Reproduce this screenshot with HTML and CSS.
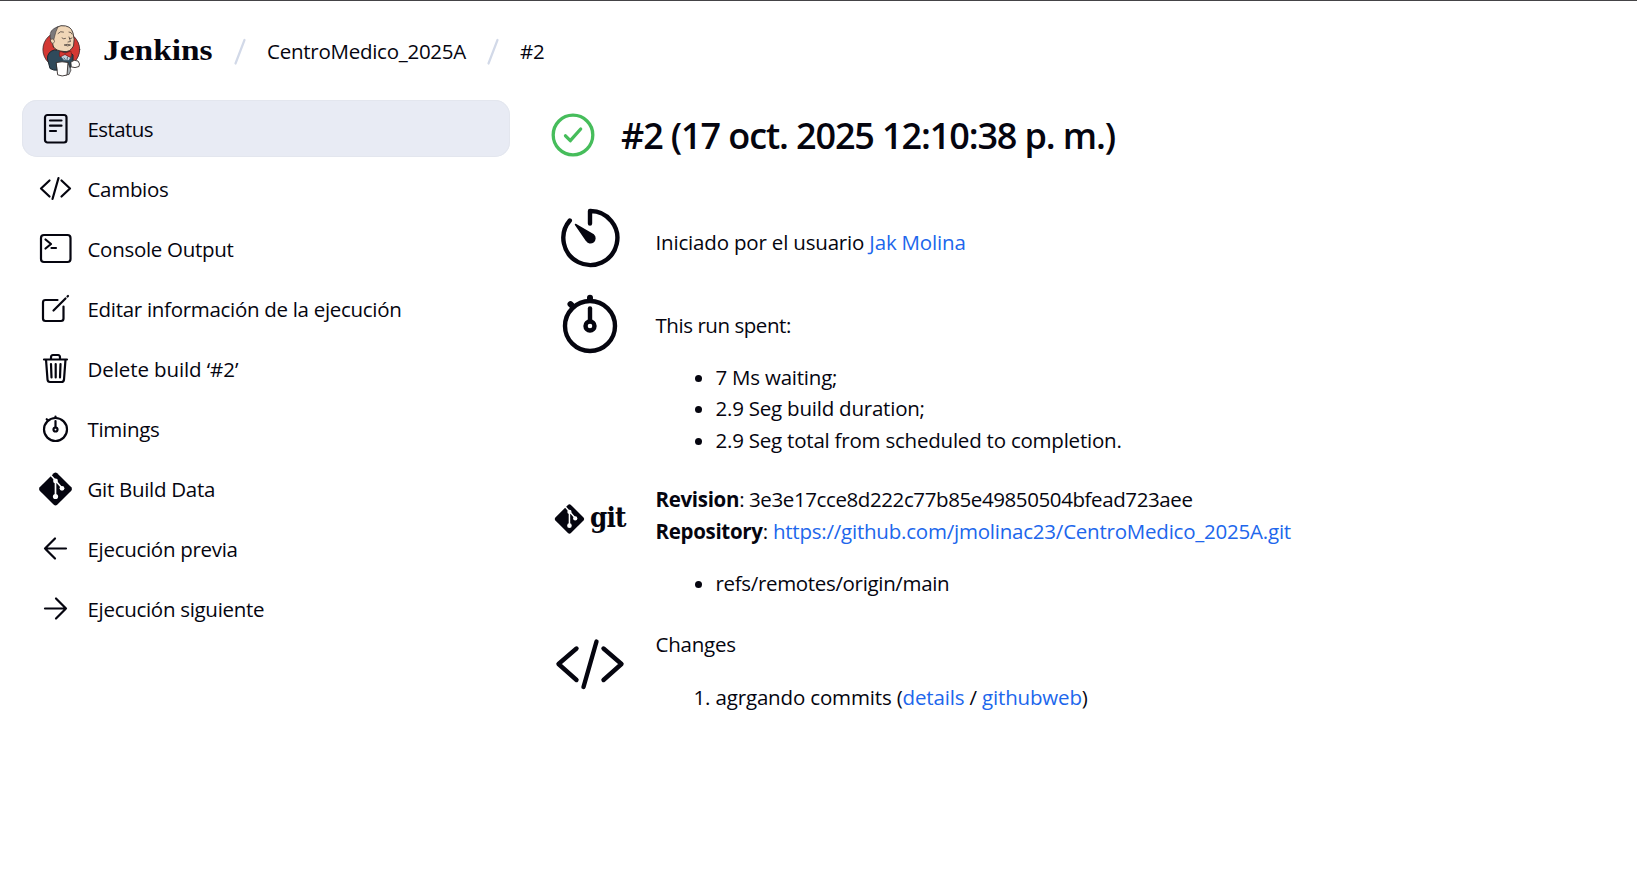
FILE: index.html
```html
<!DOCTYPE html>
<html lang="es">
<head>
<meta charset="utf-8">
<title>#2 - CentroMedico_2025A - Jenkins</title>
<link rel="stylesheet" href="styles.css">
</head>
<body>
<header class="header">
  <svg class="logo" viewBox="0 0 40 54">
    <ellipse cx="20.300" cy="25.500" rx="18.400" ry="18" fill="#d33833" stroke="#3b2a2c" stroke-width=".8"/>
    <path d="M13 26Q6 28 6.500 35L9 44.500Q13 47 17 46L28 46 32 38 32 31 28 27 22 27Z" fill="#2f4a5b" stroke="#1c2830" stroke-width="1"/>
    <path d="M12.500 23L10 14Q10 4 20 1.700Q30 1 32 9Q34 15 32.500 22Q29 28.500 23 27.500Q15 27 12.500 23Z" fill="#f0d6b7" stroke="#332c2b" stroke-width=".9"/>
    <path d="M10 17Q7 8 13 4.500L17 2.800Q14.500 8 13.500 13L12.500 17Z" fill="#7b797c" stroke="#332c2b" stroke-width=".5"/>
    <path d="M9.500 16Q12.500 13 13.500 17.500Q12.500 21 10.500 19Z" fill="#f0d6b7" stroke="#332c2b" stroke-width=".6"/>
    <path d="M17 9.500Q19.500 6.500 22.500 8M28 8Q30.500 8 31 10M21 14Q22.500 15.500 24.500 14.500M28.500 14.500Q30 15 31 14M28 13L29.500 17.500 27 18M23.500 21Q26 19.500 29.500 21Q27 23 23.500 21" fill="none" stroke="#332c2b" stroke-width=".7"/>
    <path d="M21 29L30 33 28 36.500 23 36.500 20 33Z" fill="#c4d2dc" stroke="#335061" stroke-width=".7"/>
    <path d="M23 34L24.500 36M26.500 33L26 36" stroke="#335061" stroke-width=".8"/>
    <path d="M19 27.500Q17.500 30 19 33L24 30.500 29.500 33.500Q31.500 31 29.800 27L24.500 29Z" fill="#d33833" stroke="#7d1715" stroke-width=".7"/>
    <path d="M30 38Q33 35 37 37Q39.500 40 38 42.500Q34 44.500 30.500 43Z" fill="#fff" stroke="#332c2b" stroke-width=".9"/>
    <path d="M27 39L30 46 28 50.500 24 51Z" fill="#a9b2b8" stroke="#332c2b" stroke-width=".7"/>
    <path d="M15.500 38.500Q21 37 27 38.500L26 51Q21 53 17 51Z" fill="#fff" stroke="#332c2b" stroke-width=".9"/>
  </svg>
  <span class="brand">Jenkins</span>
  <svg class="sep" viewBox="0 0 12 28"><path d="M10.500 2L1.500 25.500"/></svg>
  <span class="crumb crumb-job">CentroMedico_2025A</span>
  <svg class="sep" viewBox="0 0 12 28"><path d="M10.500 2L1.500 25.500"/></svg>
  <span class="crumb">#2</span>
</header>
<div class="page">
  <nav class="menu">
    <a class="item active"><svg viewBox="0 0 36 36"><rect x="8" y="4" width="21.500" height="27.500" rx="2.500"/><path d="M13 9.500H24.500M13 14.700H24.500M13 20H19"/></svg><span>Estatus</span></a>
    <a class="item"><svg viewBox="0 0 36 36"><path d="M12.500 9.500L4 17.500 12.500 25.500M24.500 9.500L33 17.500 24.500 25.500M21.500 7L15.500 28"/></svg><span>Cambios</span></a>
    <a class="item"><svg viewBox="0 0 36 36"><rect x="4" y="4" width="29.500" height="27" rx="3"/><path d="M8.500 8.500L14 13 8.500 17.500M14.500 17H19"/></svg><span>Console Output</span></a>
    <a class="item"><svg viewBox="0 0 36 36"><path d="M20.500 9H8.500Q6 9 6 11.500V27.500Q6 30 8.500 30H24Q26.500 30 26.500 27.500V15.500M16.500 19.500L28.500 7.500M30.500 5.500L31 5"/></svg><span>Editar información de la ejecución</span></a>
    <a class="item"><svg viewBox="0 0 36 36"><path d="M7 8.500H30M9 8.500L10.500 28.500Q10.700 31 13 31H24.500Q26.700 31 27 28.500L28.500 8.500M14 8.500V6.500Q14 4 16 4H21Q23 4 23 6.500V8.500M14 13L14.500 26.500M18.700 13V26.500M23.500 13L23 26.500"/></svg><span class="wide">Delete build ‘#2’</span></a>
    <a class="item"><svg viewBox="0 0 36 36"><circle cx="18.500" cy="18.500" r="11.500"/><path d="M18.500 10V16.500M18.500 5.500V6.500M9.700 8.200L10.500 9"/><circle cx="18.500" cy="18.500" r="2"/></svg><span>Timings</span></a>
    <a class="item"><svg class="git" viewBox="0 0 36 36"><use href="#git-mark"/></svg><span>Git Build Data</span></a>
    <a class="item"><svg viewBox="0 0 36 36"><path d="M29 17.500H8M18 7.500L8 17.500 18 27.500"/></svg><span>Ejecución previa</span></a>
    <a class="item"><svg viewBox="0 0 36 36"><path d="M8 17.500H29M19 7.500L29 17.500 19 27.500"/></svg><span>Ejecución siguiente</span></a>
  </nav>
  <main class="main">
    <div class="heading">
      <svg class="status" viewBox="0 0 44 44"><circle cx="22" cy="22" r="19.800"/><path d="M14.500 22.800L19.300 27.700 29.700 16"/></svg>
      <h1>#2 (17 oct. 2025 12:10:38 p. m.)</h1>
    </div>
    <div class="row row-cause">
      <svg class="big" viewBox="0 0 72 72"><path d="M15.800 18.500A27 27 0 1 0 36 9V21.500"/><path class="solid" d="M21.500 22.500L39.500 33A4.500 4.500 0 1 1 32.500 38.500Z"/></svg>
      <p class="cause">Iniciado por el usuario <a>Jak Molina</a></p>
    </div>
    <div class="row row-time">
      <svg class="big" viewBox="0 0 72 72"><circle cx="36" cy="36" r="25"/><path d="M36 18.500V30.500"/><path class="knob" d="M36 7.700V8.500M16.500 14.200L18 15.700"/><circle cx="36" cy="36" r="4.500"/></svg>
      <div><p class="spent">This run spent:</p><ul><li>7 Ms waiting;</li><li>2.9 Seg build duration;</li><li>2.9 Seg total from scheduled to completion.</li></ul></div>
    </div>
    <div class="row row-git">
      <div class="git-logo"><svg class="git" viewBox="0 0 36 36"><g id="git-mark"><path d="M16.800 2.200Q18.500 .8 20.200 2.200L34.300 16.300Q35.700 18 34.300 19.700L20.200 33.800Q18.500 35.200 16.800 33.800L2.700 19.700Q1.300 18 2.700 16.300Z"/><path class="cut" d="M14 4.500L18.500 9.500 25 17M18.500 9.500V25"/><circle class="dot" cx="18.500" cy="10" r="2.400"/><circle class="dot" cx="25" cy="17.300" r="2.400"/><circle class="dot" cx="18.500" cy="25.500" r="2.600"/></g></svg><span>git</span></div>
      <div><p class="rev"><b>Revision</b>: 3e3e17cce8d222c77b85e49850504bfead723aee</p><p class="repo"><b>Repository</b>: <a>https://github.com/jmolinac23/CentroMedico_2025A.git</a></p><ul><li>refs/remotes/origin/main</li></ul></div>
    </div>
    <div class="row row-changes">
      <svg class="big" viewBox="0 0 72 72"><path d="M22.500 20.500L4.500 36 22.500 52M49.500 20.500L67.500 36 49.500 52M42.500 13.500L29.500 59"/></svg>
      <div><p>Changes</p><ol><li>agrgando commits (<a>details</a> / <a>githubweb</a>)</li></ol></div>
    </div>
  </main>
</div>
</body>
</html>
```
FILE: styles.css
```css
* { box-sizing: border-box; }
body {
  margin: 0;
  min-height: 870px;
  border-top: 1px solid #444346;
  background: #fff;
  color: #05050f;
  font: 20.5px/31.5px "Open Sans", "Noto Sans", sans-serif;
  letter-spacing: -0.3px;
}
p, h1, ul, ol { margin: 0; }
svg { display: block; flex: none; overflow: visible; fill: none; stroke: #05050f; stroke-linecap: round; stroke-linejoin: round; }
a { color: #2066ec; }

.header { height: 99px; padding: 2px 0 0 41px; display: flex; align-items: center; }
.logo { width: 40px; height: 54px; margin-top: -2px; }
.brand { width: 109px; margin: -2px 22px 0; font: bold 28.500px/36px "Liberation Serif", serif; letter-spacing: 0; white-space: nowrap; transform: scaleX(1.173); transform-origin: left; }
.sep { width: 12px; height: 28px; stroke: #d2d9e8; stroke-width: 2.2; }
.crumb { margin-left: 21px; }
.crumb-job { width: 201px; margin-right: 19px; letter-spacing: -0.26px; }

.page { display: flex; }
.menu { width: 488px; margin-left: 22px; display: flex; flex-direction: column; gap: 3px; }
.item { height: 57px; padding-left: 15px; display: flex; align-items: center; gap: 14.500px; color: #05050f; border-radius: 15px; }
.item svg { width: 36px; height: 36px; stroke-width: 2.200; }
.item span { padding-top: 2px; }
.item .wide { letter-spacing: -0.1px; }
.active { background: #e8ebf4; box-shadow: inset 0 0 0 1px #e3e6ee; }
.active span { letter-spacing: -0.6px; }
.git path, .git circle { fill: #05050f; stroke: none; }
.git .cut { fill: none; stroke: #fff; stroke-width: 1.7; }
.git .dot { fill: #fff; }

.main { margin-left: 41px; }
.heading { height: 127px; padding-top: 13px; display: flex; align-items: flex-start; gap: 26px; }
.status { width: 44px; height: 44px; stroke: #46bd5b; stroke-width: 3.3; }
h1 { font-size: 36px; line-height: 46px; font-weight: 600; letter-spacing: -1.12px; white-space: nowrap; }
.row { display: flex; align-items: flex-start; gap: 29.500px; padding-left: 3px; letter-spacing: -0.22px; }
.big { width: 72px; height: 72px; stroke-width: 4.400; }
.big .solid { fill: #05050f; stroke-width: 1.5; }
.big .knob { stroke-width: 6; }
.row-cause { height: 83px; }
.row-cause .big { margin-top: -25px; }
.row-time { height: 174px; }
.row-time .big { margin-top: -20px; }
.row-time ul { margin-top: 20px; }
.cause { letter-spacing: -0.18px; }
.spent { letter-spacing: -0.45px; }
.rev { letter-spacing: -0.4px; }
.row-git { height: 145px; }
.row-git b { letter-spacing: -0.32px; }
.row-git .repo { line-height: 31px; }
.row-git li { letter-spacing: -0.33px; }
.row-changes .big { margin-top: -1px; }
.row-changes ol { letter-spacing: -0.16px; }
ul, ol { margin-top: 21px; padding-left: 60px; }
.git-logo { width: 72px; height: 72px; display: flex; align-items: center; gap: 5px; }
.git-logo svg { width: 32px; height: 32px; margin: -2px 0 0 -1.500px; }
.git-logo span { font: bold 27.500px/30px "DejaVu Serif", serif; letter-spacing: -1px; margin-top: -7px; transform: scaleX(.9); transform-origin: left; }
```
